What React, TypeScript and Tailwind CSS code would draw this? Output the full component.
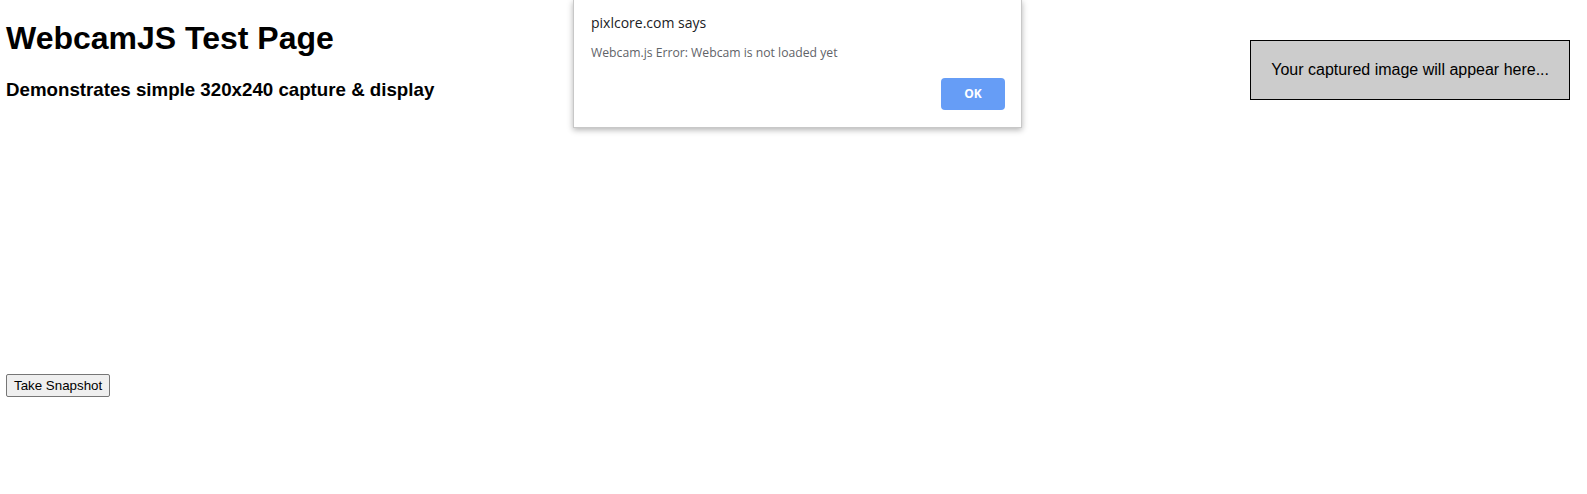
import React from "react";

const AlertDialog = () => {
  return (
    <div className="absolute left-[573px] top-0 w-[449px] bg-white border border-t-0 border-[#c8c8c8] shadow-[0_2px_6px_rgba(0,0,0,0.3)] px-[16px] pt-[13px] pb-[17px] font-['Open_Sans',sans-serif]">
      <div className="text-[14px] leading-[20px] text-[#202124] pl-[1px]">pixlcore.com says</div>
      <div className="mt-[12px] text-[12.2px] leading-[16px] text-[#5f6368] pl-[1px]">
        Webcam.js Error: Webcam is not loaded yet
      </div>
      <div className="mt-[17px] flex justify-end">
        <button className="w-[64px] h-[32px] rounded-[4px] bg-[#669df6] text-white text-[12px] font-bold">
          OK
        </button>
      </div>
    </div>
  );
};

export default function App() {
  return (
    <div className="relative w-full min-h-[494px] bg-white text-black font-['Liberation_Sans',Arial,sans-serif]">
      <div className="flex justify-between items-start">
        {/* page body */}
        <div className="pl-[6px]">
          <h1 className="mt-[20px] mb-[22.5px] text-[32px] leading-[36.8px] font-bold">WebcamJS Test Page</h1>
          <h3 className="mt-[18.72px] mb-[18.72px] text-[18.72px] leading-[21.5px] font-bold">
            Demonstrates simple 320x240 capture &amp; display
          </h3>
          <div className="w-[320px] h-[240px]" />
          <button className="mt-[14px] h-[23px] px-[7px] bg-[#efefef] border border-[#767676] rounded-[2px] text-[13.33px] leading-[15px]">
            Take Snapshot
          </button>
        </div>

        {/* results */}
        <div className="mt-[40px] mr-[17px] px-[20px] py-[20px] border border-black bg-[#cccccc] text-[16px] leading-[18px]">
          Your captured image will appear here...
        </div>
      </div>

      <AlertDialog />
    </div>
  );
}
